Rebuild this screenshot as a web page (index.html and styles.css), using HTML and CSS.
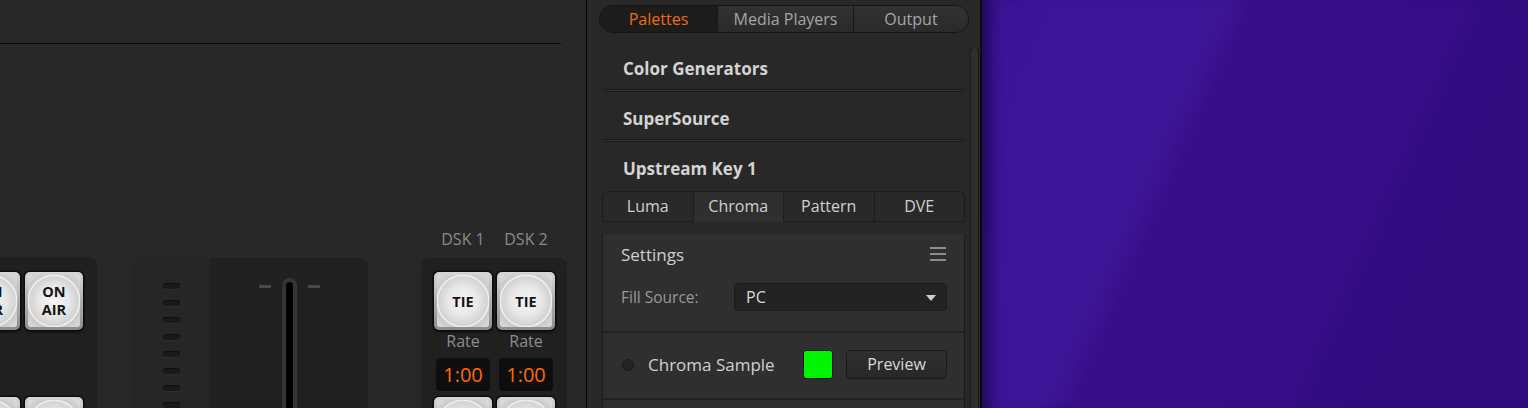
FILE: index.html
```html
<!DOCTYPE html>
<html>
<head>
<meta charset="utf-8">
<link rel="stylesheet" href="styles.css">
</head>
<body>
<div class="app">
  <div class="main">
    <div class="hline"></div>
    <div class="controls">
      <div class="keys">
        <div class="btn"><span class="face">ON<br>AIR</span></div>
        <div class="btn"><span class="face">ON<br>AIR</span></div>
        <div class="btn"><span class="face"></span></div>
        <div class="btn"><span class="face"></span></div>
      </div>
      <div class="fader">
        <div class="fader-scale">
          <span class="tick"></span><span class="tick"></span><span class="tick"></span><span class="tick"></span>
          <span class="tick"></span><span class="tick"></span><span class="tick"></span><span class="tick"></span>
        </div>
        <div class="fader-track">
          <span class="dash"></span>
          <span class="slot"><span class="slot-in"></span></span>
          <span class="dash"></span>
        </div>
      </div>
      <div class="dsk">
        <div class="dsk-labels"><span>DSK 1</span><span>DSK 2</span></div>
        <div class="dsk-box">
          <div class="dsk-col">
            <div class="btn"><span class="face tie">TIE</span></div>
            <div class="rate">Rate</div>
            <div class="time">1:00</div>
            <div class="btn next"><span class="face"></span></div>
          </div>
          <div class="dsk-col">
            <div class="btn"><span class="face tie">TIE</span></div>
            <div class="rate">Rate</div>
            <div class="time">1:00</div>
            <div class="btn next"><span class="face"></span></div>
          </div>
        </div>
      </div>
    </div>
  </div>
  <div class="vline"></div>
  <div class="side">
    <div class="seg">
      <div class="seg-tab seg-active" style="width:118px">Palettes</div>
      <div class="seg-tab" style="width:136px">Media Players</div>
      <div class="seg-tab seg-last">Output</div>
    </div>
    <div class="side-body">
      <div class="content">
        <div class="sec">Color Generators</div>
        <div class="sep"></div>
        <div class="sec">SuperSource</div>
        <div class="sep"></div>
        <div class="sec">Upstream Key 1</div>
        <div class="subtabs">
          <div class="subtab first">Luma</div>
          <div class="subtab active">Chroma</div>
          <div class="subtab">Pattern</div>
          <div class="subtab last">DVE</div>
        </div>
        <div class="pane">
          <div class="settings">
            <span>Settings</span>
            <span class="burger"><i></i><i></i><i></i></span>
          </div>
          <div class="fill">
            <span class="fill-label">Fill Source:</span>
            <div class="select"><span>PC</span><span class="caret"></span></div>
          </div>
          <div class="sample">
            <span class="radio"></span>
            <span class="sample-label">Chroma Sample</span>
            <span class="swatch"></span>
            <span class="preview">Preview</span>
          </div>
          <div class="pane-end"></div>
        </div>
      </div>
      <div class="scroll"></div>
    </div>
  </div>
  <div class="edge"></div>
  <div class="desktop"></div>
</div>
</body>
</html>
```

FILE: styles.css
```css
* { box-sizing: border-box; }
html, body { margin: 0; height: 408px; overflow: hidden; }
body {
  width: 1528px;
  background: #282828;
  font-family: "Open Sans", "Noto Sans", sans-serif;
}
.app { display: flex; height: 408px; }

/* ---------- left switcher area ---------- */
.main { width: 586px; flex: none; overflow: hidden; padding-top: 43px; }
.hline { width: 561px; height: 1px; background: #0b0b0b; }
.controls { display: flex; align-items: flex-start; margin-top: 185px; }

.keys {
  flex: none;
  margin-left: -52px;
  margin-top: 28px;
  width: 149px;
  height: 220px;
  background: #202020;
  border-radius: 8px;
  padding: 15px 14px;
  display: grid;
  grid-template-columns: 58px 58px;
  grid-auto-rows: 58px;
  column-gap: 5px;
  row-gap: 67px;
}

.btn {
  width: 58px;
  height: 58px;
  border-radius: 5px;
  background: linear-gradient(#d6d6d6, #8c8c8c);
  box-shadow: 0 0 0 1.5px #0c0c0c, 0 2px 3px rgba(0,0,0,.6);
  padding: 3px;
  flex: none;
}
.face {
  display: flex;
  align-items: center;
  justify-content: center;
  text-align: center;
  width: 100%;
  height: 100%;
  border-radius: 3px;
  background:
    radial-gradient(circle at 50% 50%, #f6f6f6 0, #e8e8e8 40%, #d3d3d3 66%, #f4f4f4 70%, #c9c9c9 74%, #e0e0e0 100%);
  font-weight: 700;
  font-size: 14.5px;
  line-height: 18px;
  color: #141414;
}
.face.tie { padding-top: 1px; }

.fader {
  flex: none;
  margin-left: 35px;
  margin-top: 29px;
  width: 236px;
  height: 200px;
  display: flex;
  border-radius: 8px;
  overflow: hidden;
  background: #202020;
}
.fader-scale {
  width: 78px;
  background: #262626;
  display: flex;
  flex-direction: column;
  align-items: center;
  padding-top: 25px;
  gap: 11px;
}
.tick {
  width: 17px;
  height: 6px;
  flex: none;
  border-radius: 3px;
  background: #1a1a1a;
  box-shadow: inset 0 1px 1px #0e0e0e, 0 1px 0 #2e2e2e;
}
.fader-track {
  flex: 1;
  display: flex;
  justify-content: center;
  align-items: flex-start;
  gap: 11px;
  padding-top: 20px;
}
.dash { width: 12px; height: 3px; margin-top: 7px; border-radius: 1px; background: #4a4a4a; }
.slot {
  width: 15px;
  height: 200px;
  border-radius: 8px 8px 0 0;
  background: #353535;
  padding: 4px 4px 0;
}
.slot-in { display: block; height: 100%; border-radius: 4px 4px 0 0; background: #000; }

.dsk { flex: none; margin-left: 53px; width: 146px; }
.dsk-labels {
  display: flex;
  gap: 5px;
  height: 29px;
  padding-left: 13px;
  color: #8a8a8a;
  font-size: 16px;
  line-height: 20px;
}
.dsk-labels span { width: 58px; text-align: center; }
.dsk-box {
  background: #202020;
  border-radius: 8px;
  padding: 14px 12px 0 13px;
  display: flex;
  gap: 5px;
  height: 180px;
}
.dsk-col { width: 58px; display: flex; flex-direction: column; align-items: center; }
.rate { height: 22px; line-height: 22px; color: #8e8e8e; font-size: 16px; }
.time {
  margin-top: 6px;
  width: 54px;
  height: 33px;
  background: #0e0e0e;
  border-radius: 4px;
  color: #ff6a00;
  font-size: 20px;
  line-height: 33px;
  text-align: center;
}
.btn.next { margin-top: 6px; }

.vline { width: 1px; flex: none; background: #050505; }

/* ---------- right palette panel ---------- */
.side { width: 393px; flex: none; display: flex; flex-direction: column; overflow: hidden; }
.seg {
  flex: none;
  margin: 5px 0 0 12px;
  width: 370px;
  height: 28px;
  display: flex;
  border: 1px solid #141414;
  border-radius: 14px;
  overflow: hidden;
}
.seg-tab {
  flex: none;
  text-align: center;
  font-size: 16px;
  line-height: 26px;
  color: #a6a6a6;
  background: linear-gradient(#323232, #2a2a2a);
  border-right: 1px solid #171717;
}
.seg-last { flex: 1; border-right: none; }
.seg-active { background: #1c1c1c; color: #f06b0c; }

.side-body { flex: none; display: flex; margin-top: 9px; }
.content { margin-left: 15px; width: 363px; flex: none; }
.scroll {
  flex: none;
  margin-left: 5px;
  margin-top: 5px;
  width: 9px;
  height: 400px;
  border-radius: 5px 5px 0 0;
  background: #2f2f2f;
  border: 1px solid #1b1b1b;
}

.sec {
  height: 47px;
  line-height: 54px;
  padding-left: 21px;
  font-weight: 700;
  font-size: 17px;
  color: #d3d3d3;
}
.sep {
  height: 3px;
  border-radius: 2px;
  background: #323232;
  border: 1px solid #1a1a1a;
}

.subtabs { display: flex; height: 31px; margin-top: 2px; }
.subtab {
  flex: 1;
  text-align: center;
  font-size: 16px;
  line-height: 29px;
  color: #d0d0d0;
  background: #292929;
  border: 1px solid #1c1c1c;
  border-left: none;
}
.subtab.first { border-left: 1px solid #1c1c1c; border-top-left-radius: 6px; }
.subtab.last { border-top-right-radius: 6px; }
.subtab.active { background: #2f2f2f; border-bottom-color: #2f2f2f; }

.pane { background: #2f2f2f; border: 1px solid #1c1c1c; border-top: none; height: 200px; }
.settings {
  display: flex;
  justify-content: space-between;
  align-items: center;
  height: 40px;
  margin-top: 12px;
  padding: 0 18px 0 18px;
  font-size: 17px;
  color: #d0d0d0;
}
.burger { display: flex; flex-direction: column; gap: 4px; width: 16px; }
.burger i { display: block; height: 2px; background: #8c8c8c; }

.fill {
  display: flex;
  align-items: center;
  padding: 0 17px 0 18px;
  margin-top: 9px;
  height: 28px;
}
.fill-label { font-size: 15.5px; color: #9a9a9a; }
.select {
  margin-left: auto;
  width: 213px;
  height: 28px;
  background: #232323;
  border: 1px solid #1a1a1a;
  border-radius: 4px;
  display: flex;
  align-items: center;
  justify-content: space-between;
  padding: 0 10px 0 11px;
  font-size: 16px;
  color: #dadada;
}
.caret {
  width: 0; height: 0;
  border-left: 5px solid transparent;
  border-right: 5px solid transparent;
  border-top: 6px solid #cfcfcf;
  margin-top: 2px;
}

.sample {
  margin-top: 20px;
  border-top: 2px solid #222;
  display: flex;
  align-items: center;
  padding: 17px 17px 19px 18px;
}
.radio {
  width: 12px; height: 12px;
  border-radius: 50%;
  background: #242424;
  border: 1px solid #1c1c1c;
  flex: none;
  margin-left: 1px;
}
.sample-label { margin-left: 14px; font-size: 17px; color: #d0d0d0; }
.swatch {
  margin-left: auto;
  width: 30px; height: 29px;
  background: #00f400;
  border: 1px solid #1a1a1a;
  border-radius: 3px;
}
.preview {
  margin-left: 13px;
  width: 101px;
  height: 29px;
  border: 1px solid #1a1a1a;
  border-radius: 4px;
  background: linear-gradient(#2f2f2f, #282828);
  text-align: center;
  font-size: 16px;
  line-height: 27px;
  color: #d8d8d8;
}
.pane-end { border-top: 2px solid #222; }

.edge { width: 2px; flex: none; background: #0a0a0a; }

/* ---------- desktop wallpaper ---------- */
.desktop {
  flex: 1;
  background: linear-gradient(114deg, #3a1397 0%, #3d159b 20%, #3c1496 34%, #380f8b 37%, #370e89 66%, #320c82 69%, #2f0b7e 100%);
  box-shadow: inset 16px 0 14px -8px rgba(10,0,30,.55);
}
```
